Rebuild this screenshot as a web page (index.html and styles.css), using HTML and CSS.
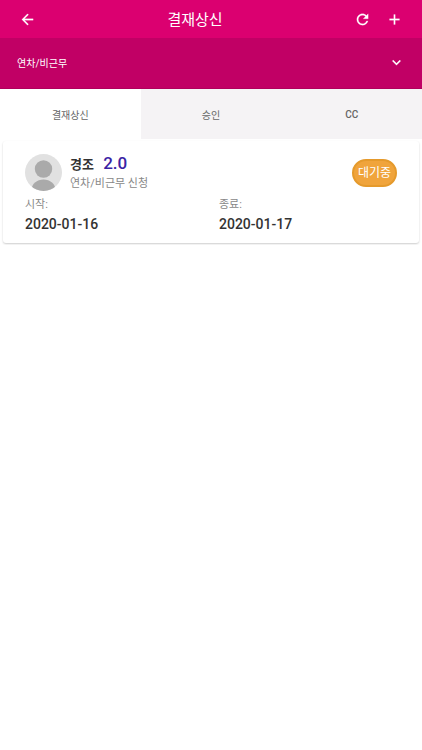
FILE: index.html
```html
<!DOCTYPE html>
<html lang="ko">
<head>
    <meta charset="UTF-8">
    <meta name="viewport" content="width=device-width, initial-scale=1.0">
    <title>결재상신</title>
    <link rel="stylesheet" href="styles.css">
</head>
<body>
    <!-- Top bar -->
    <header class="top-bar">
        <button type="button" class="icon-btn" aria-label="뒤로">
            <svg viewBox="0 0 24 24"><path d="M20 11H7.83l5.59-5.59L12 4l-8 8 8 8 1.41-1.41L7.83 13H20v-2z"/></svg>
        </button>
        <h1>결재상신</h1>
        <div class="actions">
            <button type="button" class="icon-btn" aria-label="새로고침">
                <svg viewBox="0 0 24 24"><path d="M17.65 6.35C16.2 4.9 14.21 4 12 4c-4.42 0-7.99 3.58-7.99 8s3.57 8 7.99 8c3.73 0 6.84-2.55 7.73-6h-2.08c-.82 2.33-3.04 4-5.65 4-3.31 0-6-2.69-6-6s2.69-6 6-6c1.66 0 3.14.69 4.22 1.78L13 11h7V4l-2.35 2.35z"/></svg>
            </button>
            <button type="button" class="icon-btn" aria-label="추가">
                <svg viewBox="0 0 24 24"><path d="M19 13h-6v6h-2v-6H5v-2h6V5h2v6h6v2z"/></svg>
            </button>
        </div>
    </header>

    <!-- Request type -->
    <div class="type-bar">
        <select class="type-select" aria-label="신청 종류">
            <option>연차/비근무</option>
        </select>
        <svg class="chevron" viewBox="0 0 24 24"><path d="M7.41 8.59L12 13.17l4.59-4.58L18 10l-6 6-6-6 1.41-1.41z"/></svg>
    </div>

    <nav class="tabs">
        <button type="button" class="tab active">결재상신</button>
        <button type="button" class="tab">승인</button>
        <button type="button" class="tab latin">CC</button>
    </nav>

    <main>
        <article class="card">
            <div class="card-head">
                <svg class="avatar" viewBox="0 0 37 37">
                    <defs>
                        <clipPath id="circle"><circle cx="18.5" cy="18.5" r="18.5"/></clipPath>
                    </defs>
                    <g clip-path="url(#circle)">
                        <rect width="37" height="37" fill="#e1e1e1"/>
                        <circle cx="18.5" cy="15" r="8.7" fill="#aaa"/>
                        <ellipse cx="18.5" cy="36" rx="12" ry="10.5" fill="#aaa"/>
                    </g>
                </svg>
                <div class="info">
                    <h2>경조 <span class="days">2.0</span></h2>
                    <p>연차/비근무 신청</p>
                </div>
                <span class="badge">대기중</span>
            </div>
            <dl class="dates">
                <div>
                    <dt>시작:</dt>
                    <dd>2020-01-16</dd>
                </div>
                <div>
                    <dt>종료:</dt>
                    <dd>2020-01-17</dd>
                </div>
            </dl>
        </article>
    </main>
</body>
</html>
```
FILE: styles.css
```css
/* General Styles */
* {
    margin: 0;
    padding: 0;
    box-sizing: border-box;
}

body {
    font-family: Roboto, "Noto Sans CJK KR", sans-serif;
    background: #fff;
    color: #333;
}

button, select {
    font-family: inherit;
    border: none;
    cursor: pointer;
}

svg {
    display: block;
}

/* Top bar */
.top-bar {
    display: flex;
    align-items: center;
    height: 38px;
    padding: 0 19px;
    background: #db0070;
    color: #fff;
}

.top-bar h1 {
    flex: 1;
    padding-top: 2px;
    font-size: 15px;
    font-weight: 400;
    line-height: 24px;
    text-align: center;
}

.actions {
    display: flex;
    gap: 15px;
}

.icon-btn {
    width: 17px;
    height: 17px;
    background: none;
}

.icon-btn svg {
    width: 17px;
    height: 17px;
    fill: #fff;
    stroke: #fff;
    stroke-width: 0.3;
}

/* Request type */
.type-bar {
    position: relative;
    background: #c10065;
    border-bottom: 1px solid #b0005c;
}

.type-select {
    display: block;
    width: 100%;
    height: 50px;
    padding: 0 48px 0 17px;
    appearance: none;
    background: none;
    color: #fff;
    font-size: 10px;
}

.chevron {
    position: absolute;
    top: 16px;
    right: 17px;
    width: 17px;
    height: 17px;
    fill: #fff;
    stroke: #fff;
    stroke-width: 0.3;
    pointer-events: none;
}

/* Tabs */
.tabs {
    display: grid;
    grid-template-columns: repeat(3, 1fr);
}

.tab {
    height: 50px;
    background: #f5f3f5;
    color: #666;
    font-size: 10px;
    font-weight: 400;
}

.tab.active {
    background: #fff;
}

.tab.latin {
    font-weight: 500;
}

/* Card */
.card {
    margin: 2px 3px;
    padding: 12px 22px 8px;
    border-radius: 3px;
    background: #fff;
    box-shadow: 0 1px 2px rgba(0, 0, 0, 0.2);
}

.card-head {
    display: flex;
    align-items: center;
    gap: 8px;
}

.avatar {
    width: 37px;
    height: 37px;
}

.info {
    flex: 1;
}

.info h2 {
    font-size: 13px;
    font-weight: 700;
    line-height: 20px;
}

.days {
    margin-left: 6px;
    font-size: 17px;
    font-weight: 500;
    color: #3a22a4;
}

.info p {
    font-size: 11px;
    line-height: 17px;
    color: #888;
}

.badge {
    padding: 0 4px;
    border: 2px solid #e59a2c;
    border-radius: 14px;
    background: #f0a43c;
    color: #fff;
    font-size: 12px;
    line-height: 24px;
}

.dates {
    display: grid;
    grid-template-columns: 1fr 1fr;
    gap: 16px;
    margin-top: 4px;
}

.dates dt {
    font-size: 11px;
    line-height: 18px;
    color: #888;
}

.dates dd {
    font-size: 14px;
    font-weight: 500;
    line-height: 21px;
}
```
